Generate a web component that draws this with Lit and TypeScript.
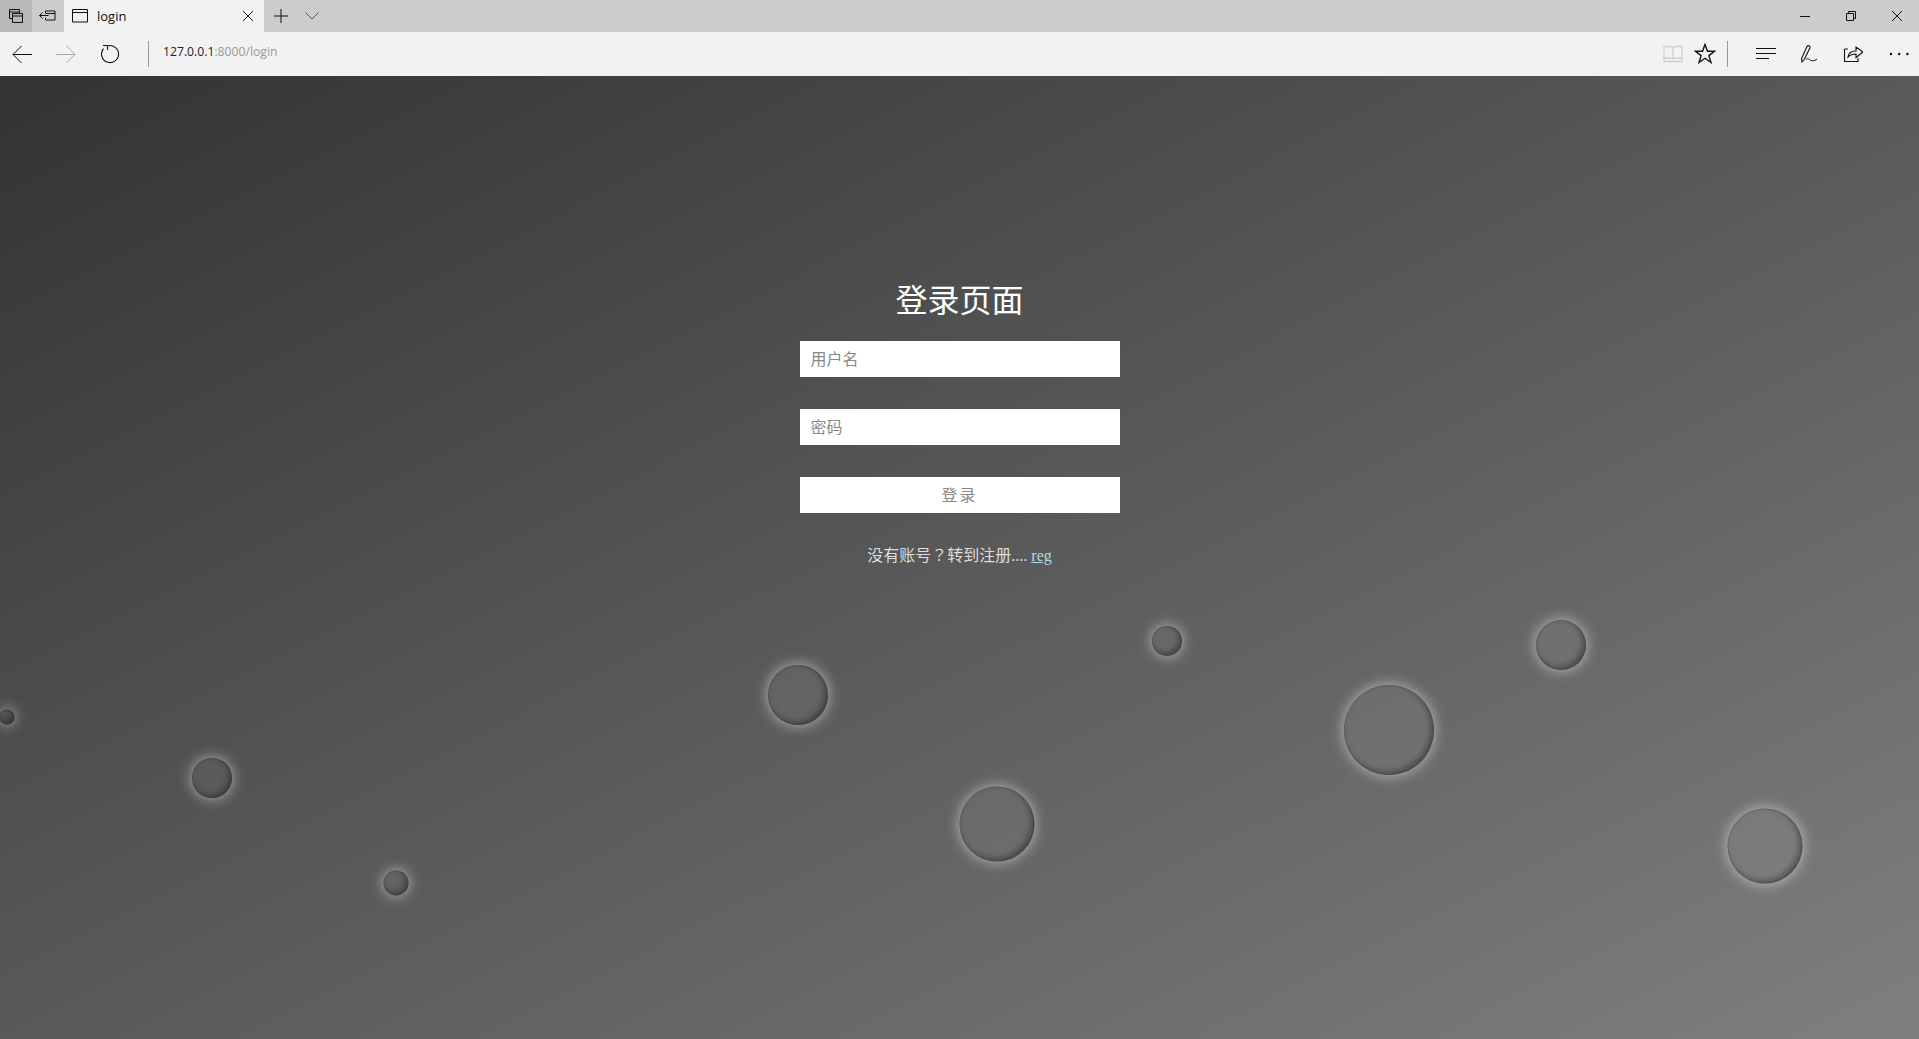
import { LitElement, html, css, svg } from "lit";
import { customElement } from "lit/decorators.js";

const ic = (w: number, h: number, body: unknown) =>
  html`<svg class="ic" width=${w} height=${h} viewBox="0 0 ${w} ${h}" fill="none" stroke="currentColor" stroke-width="1">${body}</svg>`;

const bubbles = [
  { x: 7, y: 717, d: 15 },
  { x: 212, y: 778, d: 40 },
  { x: 396, y: 883, d: 25 },
  { x: 798, y: 695, d: 60 },
  { x: 997, y: 824, d: 75 },
  { x: 1167, y: 641, d: 30 },
  { x: 1389, y: 730, d: 90 },
  { x: 1561, y: 645, d: 50 },
  { x: 1765, y: 846, d: 75 },
];

@customElement("app-root")
export class AppRoot extends LitElement {
  static styles = css`
    :host { display: flex; flex-direction: column; width: 100%; height: 1039px; overflow: hidden; font-family: "Noto Sans CJK SC", sans-serif; }
    .ic { display: block; color: #111; }
    .tabbar { display: flex; align-items: stretch; height: 32px; background: #ccc; flex: none; }
    .cell { display: flex; align-items: center; justify-content: center; flex: none; }
    .c32 { width: 32px; }
    .dark { background: #b8b8b8; }
    .tab { display: flex; align-items: center; width: 200px; background: #f2f2f2; padding-left: 8px; box-sizing: border-box; flex: none; }
    .tab-title { margin-left: 9px; font: 13px "Open Sans", sans-serif; color: #111; flex: 1; padding-bottom: 1px; }
    .tab-x { margin-right: 10px; }
    .newtab { width: 34px; }
    .chev { width: 28px; }
    .chev .ic { color: #555; }
    .spacer { flex: 1; }
    .win { width: 46px; }
    .win-last { margin-right: -1px; }
    .toolbar { display: flex; align-items: center; height: 44px; background: #f2f2f2; flex: none; }
    .tool { width: 44px; height: 44px; }
    .forward .ic { color: #aaa; }
    .sep { width: 1px; height: 26px; background: #999; flex: none; }
    .sep-left { margin-left: 16px; }
    .sep-right { margin: 0 15px 0 6px; }
    .url { margin-left: 14px; font: 12.2px "Open Sans", sans-serif; color: #222; padding-bottom: 6px; }
    .url span { color: #999; }
    .small { width: 32px; height: 44px; }
    .page { position: relative; flex: 1; background: linear-gradient(to bottom right, #333, #7f7f7f); overflow: hidden; display: flex; flex-direction: column; align-items: center; }
    h1 { margin: 198px 0 0; font-size: 32px; line-height: 48px; font-weight: 400; color: #fff; text-align: center; height: 67px; }
    .field { display: block; width: 320px; height: 36px; box-sizing: border-box; background: #fff; border: 0; outline: 0; padding: 0 10px 2px 11px; margin: 0 0 32px; font: 16px "Noto Sans CJK SC", sans-serif; color: #777; }
    .field::placeholder { color: #888; }
    .btn { display: block; width: 320px; height: 36px; background: #fff; border: 0; font: 16px "Noto Sans CJK SC", sans-serif; color: #888; letter-spacing: 2px; padding: 0 0 2px; }
    p { margin: 29px 0 0; font: 16px/24px "Liberation Serif", "Noto Sans CJK SC", serif; color: #ddd; }
    .q { font-family: "Noto Sans CJK TC", sans-serif; }
    a { color: #b5d9e8; }
    .bubble { position: absolute; border-radius: 50%; background: rgba(255,255,255,.05); box-shadow: 0 0 13px 1px rgba(255,255,255,.5), inset -3px -3px 6px rgba(0,0,0,.35), inset 0 0 2px rgba(0,0,0,.3); transform: translate(-50%,-50%); }
  `;

  render() {
    return html`
      <div class="tabbar">
        <div class="cell c32 dark">${ic(16, 16, svg`<path d="M1.500 1.500h10v9h-10z M1.500 4h10"/><path fill="#b8b8b8" d="M4.500 5.500h10v9h-10z"/><path d="M4.500 8h10"/>`)}</div>
        <div class="cell c32">${ic(18, 12, svg`<path d="M6.500 3.500v-2.500h9.500v9h-9.500v-2.500M0.500 5.500h9M3.500 2.500l-3 3 3 3M6.500 3.500h9.500"/>`)}</div>
        <div class="tab">
          ${ic(16, 14, svg`<path d="M0.500 0.500h15v12.500h-15zM0.500 3.500h15"/>`)}
          <span class="tab-title">login</span>
          <span class="tab-x">${ic(12, 12, svg`<path d="M1 1l10 10M11 1l-10 10"/>`)}</span>
        </div>
        <div class="cell newtab">${ic(14, 14, svg`<path d="M7 0v14M0 7h14"/>`)}</div>
        <div class="cell chev">${ic(14, 8, svg`<path d="M0.500 0.500l6.500 6.500 6.500-6.500"/>`)}</div>
        <div class="spacer"></div>
        <div class="cell win">${ic(12, 12, svg`<path d="M1 6.500h10"/>`)}</div>
        <div class="cell win">${ic(12, 12, svg`<path d="M1.500 3.500h7v7h-7zM3.500 3.500v-2h7v7h-2"/>`)}</div>
        <div class="cell win win-last">${ic(12, 12, svg`<path d="M1 1l10 10M11 1l-10 10"/>`)}</div>
      </div>
      <div class="toolbar">
        <div class="cell tool">${ic(20, 20, svg`<path d="M20 10.500h-19M9.500 2l-8.500 8.500 8.500 8.500"/>`)}</div>
        <div class="cell tool forward">${ic(20, 20, svg`<path d="M0 10.500h19M10.500 2l8.500 8.500-8.500 8.500"/>`)}</div>
        <div class="cell tool">${ic(20, 20, svg`<path d="M7.500 2A8.500 8.500 0 1 1 3.500 4.700" stroke-width="1.100"/><path d="M3 1.500H7.500V6"/>`)}</div>
        <div class="sep sep-left"></div>
        <div class="url">127.0.0.1<span>:8000/login</span></div>
        <div class="spacer"></div>
        <div class="cell small">${ic(20, 18, svg`<g stroke="#cfcfcf" stroke-width="1.300"><path d="M1 1.500h6c1.500 0 3 .5 3 2v11c0-1-1.500-1.500-3-1.500h-6zM19 1.500h-6c-1.500 0-3 .5-3 2v11c0-1 1.500-1.500 3-1.500h6zM1 1.500v15h18v-15"/></g>`)}</div>
        <div class="cell small">${ic(22, 22, svg`<path d="M11 1.500l2.500 6.800h7l-5.600 4.300 2.100 7-6-4.300-6 4.300 2.100-7-5.600-4.300h7z" stroke-width="1.400"/>`)}</div>
        <div class="sep sep-right"></div>
        <div class="cell tool">${ic(22, 14, svg`<path d="M2 1.500h20M2 6.500h20M2 11.500h13"/>`)}</div>
        <div class="cell tool">${ic(22, 20, svg`<path d="M4 18L3.500 14.500l5.500-12c1-1.800 3.500-.5 3 1.200L6.200 15.500z" stroke-width="1.100"/><path d="M8 15.500c1.500-2 2.800-.3 4.500 .8s3.500 .5 6.500-1"/>`)}</div>
        <div class="cell tool">${ic(20, 20, svg`<path d="M1.500 5V17.500H15V14M1.500 5H5" stroke-width="1.100"/><path d="M5 13C5.500 9 9 7 13 7V3l7 5-7 5.500V10c-4 0-6 1-8 3z" stroke-width="1.100"/>`)}</div>
        <div class="cell tool">${ic(24, 4, svg`<g fill="#111" stroke="none"><circle cx="6" cy="2" r="1.200"/><circle cx="14.200" cy="2" r="1.200"/><circle cx="22.400" cy="2" r="1.200"/></g>`)}</div>
      </div>
      <div class="page">
        <h1>登录页面</h1>
        <input class="field" placeholder="用户名" />
        <input class="field" placeholder="密码" />
        <button class="btn">登录</button>
        <p>没有账号<span class="q" lang="zh-TW">？</span>转到注册.... <a href="#">reg</a></p>
        ${bubbles.map(b => html`<div class="bubble" style="left:${b.x}px;top:${b.y - 76}px;width:${b.d}px;height:${b.d}px"></div>`)}
      </div>
    `;
  }
}
